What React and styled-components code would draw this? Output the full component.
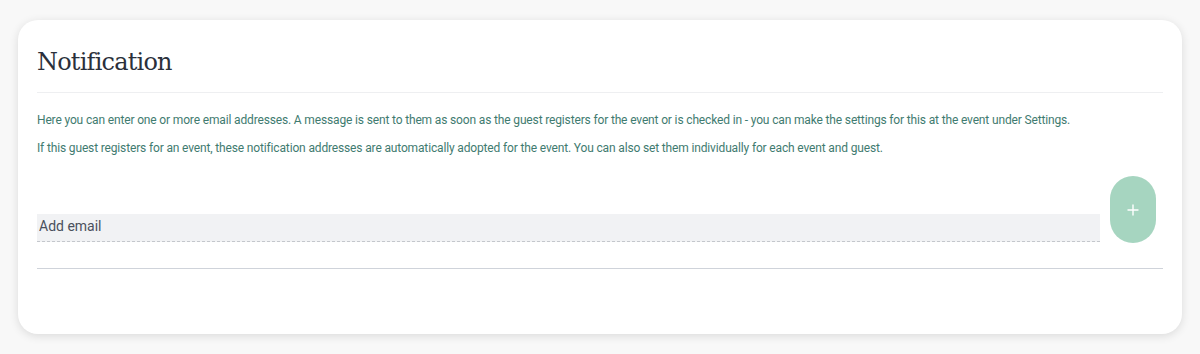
import React, { useState } from 'react';
import styled, { createGlobalStyle } from 'styled-components';

const GlobalStyle = createGlobalStyle`
  html, body {
    margin: 0;
    padding: 0;
    background: #f8f8f8;
  }
  body {
    font-family: Roboto, "Liberation Sans", sans-serif;
  }
`;

const Page = styled.div`
  width: 1200px;
  height: 354px;
  box-sizing: border-box;
  padding: 20px 18px 20px 18px;
`;

const Card = styled.section`
  background: #ffffff;
  border-radius: 20px;
  box-shadow: 0 2px 10px rgba(0, 0, 0, 0.12);
  height: 314px;
  box-sizing: border-box;
  padding: 26px 19px 0 19px;
`;

const Title = styled.h2`
  margin: 0;
  font-family: "DejaVu Serif", "Liberation Serif", serif;
  font-weight: 400;
  font-size: 24px;
  letter-spacing: -0.8px;
  line-height: 32px;
  color: #2b303b;
  padding-bottom: 14px;
  border-bottom: 1px solid #eeeff1;
`;

const Hint = styled.p`
  margin: ${p => (p.$first ? '18px' : '10px')} 0 0 0;
  font-size: 12px;
  line-height: 18px;
  color: #3f7b70;
  letter-spacing: -0.15px;
`;

const FieldRow = styled.div`
  display: flex;
  align-items: flex-end;
  gap: 10px;
  margin-top: 19px;
  padding-bottom: 25px;
  border-bottom: 1px solid #cfd3da;
`;

const EmailInput = styled.input`
  flex: 1;
  height: 28px;
  box-sizing: border-box;
  border: none;
  border-bottom: 1px dashed #c4c7cc;
  background: #f1f2f4;
  padding: 0 2px 4px 2px;
  font-family: Roboto, "Liberation Sans", sans-serif;
  font-size: 14px;
  color: #3d4350;
  outline: none;
  margin-bottom: 1px;
  &::placeholder {
    color: #4a505c;
  }
`;

const AddButton = styled.button`
  width: 46px;
  height: 67px;
  border: none;
  border-radius: 23px;
  background: #a6d5c0;
  color: #ffffff;
  display: flex;
  align-items: center;
  justify-content: center;
  margin-right: 7px;
  cursor: pointer;
  padding: 0;
`;

export default function App() {
  const [email, setEmail] = useState('');

  return (
    <>
      <GlobalStyle />
      <Page>
        <Card>
          <Title>Notification</Title>
          <Hint $first>
            Here you can enter one or more email addresses. A message is sent to them as soon as the guest registers for the event or is checked in - you can make the settings for this at the event under Settings.
          </Hint>
          <Hint>
            If this guest registers for an event, these notification addresses are automatically adopted for the event. You can also set them individually for each event and guest.
          </Hint>
          <FieldRow>
            <EmailInput
              value={email}
              onChange={e => setEmail(e.target.value)}
              placeholder="Add email"
            />
            <AddButton type="button" aria-label="Add">
              <svg width="12" height="12" viewBox="0 0 12 12">
                <path d="M6 1v10M1 6h10" stroke="#fff" strokeWidth="1.4" strokeLinecap="round" />
              </svg>
            </AddButton>
          </FieldRow>
        </Card>
      </Page>
    </>
  );
}
